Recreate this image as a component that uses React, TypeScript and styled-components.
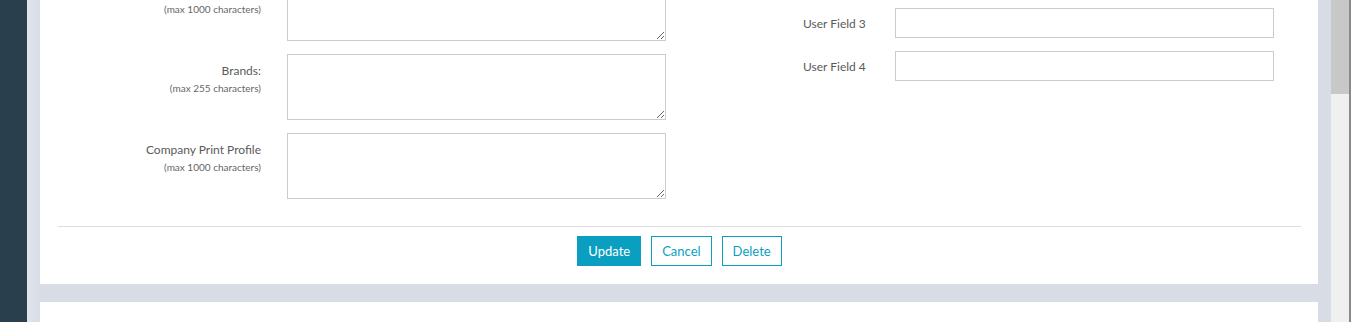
import styled, { createGlobalStyle } from "styled-components";

const GlobalStyle = createGlobalStyle`
  html, body {
    margin: 0;
    padding: 0;
    height: 100%;
    overflow: hidden;
  }
  body {
    font-family: Lato, "Open Sans", sans-serif;
    background: #d8dde5;
  }
  #root {
    height: 100%;
  }
`;

const Page = styled.div`
  display: flex;
  height: 322px;
  overflow: hidden;
`;

const Sidebar = styled.div`
  width: 27px;
  flex-shrink: 0;
  background: #2a3f4d;
`;

const Main = styled.div`
  flex: 1;
  padding: 0 13px;
  background: linear-gradient(90deg, #dfe4ec 0, #d8dde5 14px);
  overflow: hidden;
`;

const ScrollTrack = styled.div`
  width: 20px;
  flex-shrink: 0;
  background: #f0f0f0;
  border-right: 2px solid #8a8a8a;
  box-sizing: border-box;
`;

const ScrollThumb = styled.div`
  height: 94px;
  background: #c8c8c8;
`;

const Card = styled.div<{ $offset?: number }>`
  background: #fff;
  padding: 18px 17px 18px 18px;
  box-sizing: border-box;
  margin-top: ${(p) => p.$offset ?? 0}px;
`;

const BlankCard = styled.div`
  background: #fff;
  height: 60px;
  margin-top: 18px;
`;

const Columns = styled.div`
  display: grid;
  grid-template-columns: 621px 1fr;
`;

const Column = styled.div<{ $top?: number }>`
  display: flex;
  flex-direction: column;
  gap: 13px;
  padding-top: ${(p) => p.$top ?? 0}px;
`;

const AreaRow = styled.div`
  display: flex;
  align-items: flex-start;
`;

const AreaLabel = styled.div`
  width: 203px;
  padding-right: 26px;
  padding-top: 9px;
  text-align: right;
`;

const Title = styled.div`
  min-height: 16px;
  color: #5a5a5a;
  font-size: 12px;
  line-height: 16px;
`;

const Hint = styled.div`
  font-size: 10px;
  line-height: 18px;
  color: #666;
`;

const Area = styled.textarea`
  width: 379px;
  height: 66px;
  box-sizing: border-box;
  border: 1px solid #cccccc;
  border-radius: 0;
  margin: 0;
  padding: 4px 6px;
  font-family: inherit;
  display: block;
`;

const FieldRow = styled.div`
  display: flex;
  align-items: center;
  padding-left: 124px;
`;

const FieldLabel = styled.div`
  width: 92px;
  color: #5a5a5a;
  font-size: 12px;
`;

const Input = styled.input`
  width: 379px;
  height: 30px;
  box-sizing: border-box;
  border: 1px solid #cccccc;
  border-radius: 0;
  margin: 0;
  padding: 0 6px;
  font-family: inherit;
`;

const Divider = styled.hr`
  border: 0;
  border-top: 1px solid #dddddd;
  margin: 27px 0 9px;
`;

const Actions = styled.div`
  display: flex;
  justify-content: center;
  gap: 10px;
`;

const Button = styled.button<{ $primary?: boolean }>`
  height: 30px;
  padding: 0 10px;
  font-family: inherit;
  font-size: 13px;
  border: 1px solid #0a9fc1;
  background: ${(p) => (p.$primary ? "#0a9fc1" : "#fff")};
  color: ${(p) => (p.$primary ? "#fff" : "#0a9fc1")};
  border-radius: 0;
  cursor: pointer;
`;

const areas = [
  { label: "", hint: "(max 1000 characters)" },
  { label: "Brands:", hint: "(max 255 characters)" },
  { label: "Company Print Profile", hint: "(max 1000 characters)" },
];

const fields = ["User Field 3", "User Field 4"];

export default function App() {
  return (
    <>
      <GlobalStyle />
      <Page>
        <Sidebar />
        <Main>
          <Card $offset={-43}>
            <Columns>
              <Column>
                {areas.map((a, i) => (
                  <AreaRow key={i}>
                    <AreaLabel>
                      <Title>{a.label}</Title>
                      <Hint>{a.hint}</Hint>
                    </AreaLabel>
                    <Area />
                  </AreaRow>
                ))}
              </Column>
              <Column $top={33}>
                {fields.map((f) => (
                  <FieldRow key={f}>
                    <FieldLabel>{f}</FieldLabel>
                    <Input type="text" />
                  </FieldRow>
                ))}
              </Column>
            </Columns>
            <Divider />
            <Actions>
              <Button $primary>Update</Button>
              <Button>Cancel</Button>
              <Button>Delete</Button>
            </Actions>
          </Card>
          <BlankCard />
        </Main>
        <ScrollTrack>
          <ScrollThumb />
        </ScrollTrack>
      </Page>
    </>
  );
}
